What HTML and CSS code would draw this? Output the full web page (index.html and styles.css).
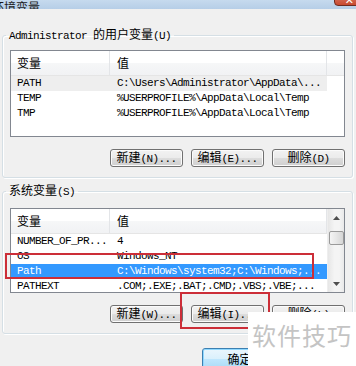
FILE: index.html
```html
<!DOCTYPE html>
<html lang="zh-CN">
<head>
  <meta charset="UTF-8">
  <meta name="viewport" content="width=device-width, initial-scale=1.0">
  <title>环境变量</title>
  <link rel="stylesheet" href="styles.css">
</head>
<body>
  <div class="window">
    <div class="titlebar">
      <span class="title">环境变量</span>
      <span class="close">✕</span>
    </div>

    <div class="client">
      <fieldset class="group">
        <legend>Administrator <span class="zh">的用户变量</span>(U)</legend>
        <div class="list tall">
          <div class="list-main">
            <div class="head">
              <span class="c1 zh">变量</span>
              <span class="c2 zh">值</span>
            </div>
            <div class="row hot"><span class="c1">PATH</span><span class="c2">C:\Users\Administrator\AppData\...</span></div>
            <div class="row"><span class="c1">TEMP</span><span class="c2">%USERPROFILE%\AppData\Local\Temp</span></div>
            <div class="row"><span class="c1">TMP</span><span class="c2">%USERPROFILE%\AppData\Local\Temp</span></div>
          </div>
          <div class="list-side">
            <div class="head"></div>
          </div>
        </div>
        <div class="buttons">
          <button class="btn"><span class="zh">新建</span>(N)...</button>
          <button class="btn"><span class="zh">编辑</span>(E)...</button>
          <button class="btn"><span class="zh">删除</span>(D)</button>
        </div>
      </fieldset>

      <fieldset class="group second">
        <legend><span class="zh">系统变量</span>(S)</legend>
        <div class="list short">
          <div class="list-main">
            <div class="head">
              <span class="c1 zh">变量</span>
              <span class="c2 zh">值</span>
            </div>
            <div class="row"><span class="c1">NUMBER_OF_PR...</span><span class="c2">4</span></div>
            <div class="row"><span class="c1">OS</span><span class="c2">Windows_NT</span></div>
            <div class="row selected"><span class="c1">Path</span><span class="c2">C:\Windows\system32;C:\Windows;...</span></div>
            <div class="row"><span class="c1">PATHEXT</span><span class="c2">.COM;.EXE;.BAT;.CMD;.VBS;.VBE;...</span></div>
          </div>
          <div class="scrollbar">
            <div class="arrow">
              <svg width="7" height="4" viewBox="0 0 7 4"><polygon points="3.5,0 7,4 0,4" fill="#4f4f4f"/></svg>
            </div>
            <div class="thumb"></div>
            <div class="track"></div>
            <div class="arrow">
              <svg width="7" height="4" viewBox="0 0 7 4"><polygon points="0,0 7,0 3.5,4" fill="#4f4f4f"/></svg>
            </div>
          </div>
        </div>
        <div class="buttons">
          <button class="btn"><span class="zh">新建</span>(W)...</button>
          <button class="btn"><span class="zh">编辑</span>(I)...</button>
          <button class="btn"><span class="zh">删除</span>(L)</button>
        </div>
      </fieldset>

      <div class="dialog-buttons">
        <button class="btn default"><span class="zh">确定</span></button>
        <button class="btn wide"><span class="zh">取消</span></button>
      </div>
    </div>

    <div class="mark mark-row"></div>
    <div class="mark mark-btn"></div>
    <div class="watermark">软件技巧</div>
  </div>
</body>
</html>
```

FILE: styles.css
```css
body {
  margin: 0;
  background: #f0f0f0;
  font-family: "Liberation Mono", "DejaVu Sans Mono", monospace;
  font-size: 11px;
  letter-spacing: -0.6px;
  color: #000;
  overflow: hidden;
}
.zh {
  font-family: "Noto Sans CJK SC", sans-serif;
  font-size: 12px;
  letter-spacing: 0;
}
.window {
  position: relative;
  width: 356px;
  height: 366px;
  overflow: hidden;
}
.titlebar {
  height: 9px;
  display: flex;
  align-items: flex-end;
  background: linear-gradient(#c6daee, #b6cee7);
  overflow: hidden;
}
.title {
  font-family: "Noto Sans CJK SC", sans-serif;
  font-size: 12px;
  letter-spacing: 0;
  line-height: 14px;
  margin-left: -8px;
  margin-bottom: -5px;
  color: #1a1a1a;
}
.close {
  margin-left: auto;
  margin-right: -8px;
  margin-bottom: 3px;
  width: 30px;
  height: 20px;
  flex-shrink: 0;
  box-sizing: border-box;
  display: flex;
  align-items: flex-end;
  justify-content: center;
  background: linear-gradient(#e8a18f, #c8492f);
  border: 1px solid #6e2b1f;
  border-radius: 0 0 4px 4px;
  color: #fff;
  font-family: "DejaVu Sans", sans-serif;
  font-size: 11px;
  font-weight: bold;
  line-height: 9px;
}
.client {
  padding: 18px 3px 0 2px;
}
.group {
  margin: 0;
  min-width: 0;
  padding: 7px 7px 10px;
  border: 1px solid #d5dfe5;
  border-radius: 3px;
  box-shadow: 1px 1px 0 #fff, inset 1px 1px 0 #fff;
}
.group.second {
  margin-top: 5px;
  padding-top: 9px;
}
.group legend {
  margin-left: -4px;
  padding: 0 3px;
  line-height: 14px;
}
.list {
  display: flex;
  border: 1px solid #828790;
  background: #fff;
  overflow: hidden;
}
.list.tall {
  height: 85px;
}
.list.short {
  height: 83px;
}
.list-main {
  width: 316px;
  flex-shrink: 0;
}
.list-side {
  flex: 1;
}
.head {
  display: flex;
  height: 24px;
  border-bottom: 1px solid #e5e5e5;
  background: linear-gradient(#ffffff 0, #ffffff 50%, #f6f7f8 50%, #f1f2f4 100%);
}
.head span {
  line-height: 24px;
  border-right: 1px solid #e3e5e8;
}
.c1 {
  width: 99px;
  padding-left: 6px;
  box-sizing: border-box;
  flex-shrink: 0;
  overflow: hidden;
}
.c2 {
  width: 217px;
  padding-left: 7px;
  box-sizing: border-box;
  flex-shrink: 0;
  overflow: hidden;
}
.row {
  display: flex;
  height: 15px;
  line-height: 15px;
  white-space: nowrap;
}
.row.hot {
  background: #eeeeee;
}
.row.selected {
  background: #3399ff;
  color: #fff;
}
.scrollbar {
  flex: 1;
  display: flex;
  flex-direction: column;
  align-items: center;
  background: linear-gradient(90deg, #e6e6e6, #f4f4f4 40%, #f4f4f4 70%, #e9e9e9);
  border-left: 1px solid #eeeeee;
}
.arrow {
  height: 17px;
  display: flex;
  align-items: center;
  justify-content: center;
}
.thumb {
  margin-top: 5px;
  width: 15px;
  height: 14px;
  box-sizing: border-box;
  border: 1px solid #9a9a9a;
  border-radius: 2px;
  background: linear-gradient(90deg, #f4f4f4, #e6e6e6 50%, #d6d6d6);
}
.track {
  flex: 1;
}
.buttons {
  display: flex;
  justify-content: flex-end;
  gap: 8px;
  margin-top: 12px;
}
.btn {
  width: 73px;
  height: 18px;
  padding: 0;
  border: 1px solid #707070;
  border-radius: 3px;
  background: linear-gradient(#f2f2f2 0, #ebebeb 50%, #dddddd 50%, #cfcfcf 100%);
  box-shadow: inset 0 0 0 1px #fbfbfb;
  font: inherit;
  letter-spacing: -0.6px;
  line-height: 14px;
  color: #000;
  white-space: nowrap;
}
.dialog-buttons {
  display: flex;
  justify-content: flex-end;
  gap: 6px;
  margin: 14px -3px 0 0;
}
.btn.default {
  width: 75px;
  height: 23px;
  border-color: #3c7fb1;
  background: linear-gradient(#eaf6fd 0, #d9f0fc 50%, #bee6fd 50%, #a7d9f5 100%);
  box-shadow: inset 0 0 0 1px #8fd8ff;
}
.btn.wide {
  width: 73px;
  height: 23px;
}
.mark {
  position: absolute;
  border: 2px solid #cc2e38;
}
.mark-row {
  left: 5px;
  top: 253px;
  width: 305px;
  height: 22px;
}
.mark-btn {
  left: 180px;
  top: 292px;
  width: 86px;
  height: 33px;
}
.watermark {
  position: absolute;
  left: 248px;
  top: 312px;
  right: 0;
  bottom: 0;
  padding: 11px 0 0 4px;
  background: #fff;
  color: #c4c4c4;
  font-family: "Noto Sans CJK SC", sans-serif;
  font-size: 24px;
  letter-spacing: 1px;
  line-height: 24px;
  white-space: nowrap;
}
```
